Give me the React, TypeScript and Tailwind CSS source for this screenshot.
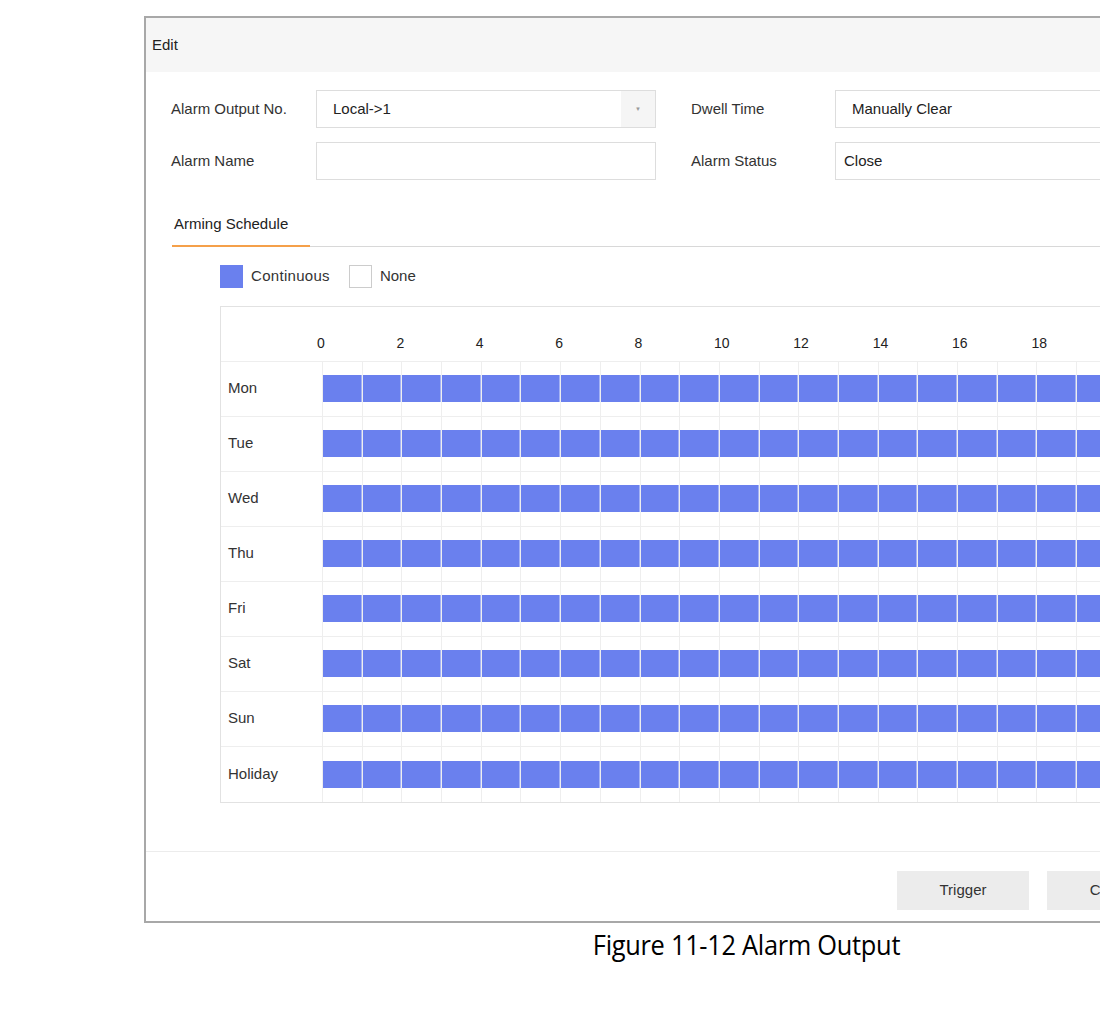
import React from "react";

const days = ["Mon", "Tue", "Wed", "Thu", "Fri", "Sat", "Sun", "Holiday"];
const hours = Array.from({ length: 24 }, (_, i) => i);

export default function App() {
  return (
    <div className="w-[1100px] h-[1013px] overflow-hidden bg-white relative" style={{ fontFamily: "Arial, 'Liberation Sans', sans-serif" }}>
      <div className="ml-[144px] mt-[16px] w-[1200px] h-[907px] border-2 border-[#a8a8a8] flex flex-col text-[#222]">
        <div className="h-[54px] bg-[#f6f6f6] flex items-center pl-[6px] text-[15px]">Edit</div>
        <div className="flex-1 relative">
          <div className="flex pt-[18px]">
            <div className="flex flex-col gap-[14px] pl-[25px]">
              <div className="flex items-center h-[38px]">
                <span className="w-[145px] text-[15px] text-[#333]">Alarm Output No.</span>
                <div className="w-[340px] h-[38px] border border-[#ddd] flex items-center">
                  <span className="flex-1 pl-[16px] text-[15px]">Local-&gt;1</span>
                  <div className="w-[34px] h-full bg-[#f5f5f5] flex items-center justify-center text-[6px] text-[#999]">▼</div>
                </div>
              </div>
              <div className="flex items-center h-[38px]">
                <span className="w-[145px] text-[15px] text-[#333]">Alarm Name</span>
                <div className="w-[340px] h-[38px] border border-[#ddd]" />
              </div>
            </div>
            <div className="flex flex-col gap-[14px] pl-[35px]">
              <div className="flex items-center h-[38px]">
                <span className="w-[144px] text-[15px] text-[#333]">Dwell Time</span>
                <div className="w-[400px] h-[38px] border border-[#ddd] flex items-center pl-[16px] text-[15px]">Manually Clear</div>
              </div>
              <div className="flex items-center h-[38px]">
                <span className="w-[144px] text-[15px] text-[#333]">Alarm Status</span>
                <div className="w-[400px] h-[38px] border border-[#ddd] flex items-center pl-[8px] text-[15px]">Close</div>
              </div>
            </div>
          </div>
          <div className="ml-[26px] mt-[33px] border-b border-[#d8d8d8] flex">
            <div className="px-[2px] pb-[9px] border-b-2 border-[#f5a04a] -mb-[1px] text-[15px] w-[138px]">Arming Schedule</div>
          </div>
          <div className="ml-[74px] mt-[18px] flex items-center h-[24px] text-[15px] text-[#333]">
            <div className="w-[23px] h-[23px] bg-[#6a80ee]" />
            <span className="ml-[8px] tracking-[0.3px]">Continuous</span>
            <div className="ml-[19px] w-[23px] h-[23px] border border-[#ccc]" />
            <span className="ml-[8px]">None</span>
          </div>
          <div className="ml-[74px] mt-[17px] w-[1100px] border border-[#e2e2e2]">
            <div className="flex h-[55px] border-b border-[#eee]">
              <div className="w-[102px]" />
              {hours.map((h) => (
                <div key={h} className="w-[39.7px] relative">
                  {h % 2 === 0 && <span className="absolute left-[-6px] top-[26px] text-[14px]">{h}</span>}
                </div>
              ))}
            </div>
            {days.map((d) => (
              <div key={d} className="flex h-[55px] border-b border-[#eee] last:border-b-0">
                <div className="w-[102px] flex items-center pl-[7px] text-[15px] text-[#333] border-r border-[#eee]">{d}</div>
                {hours.map((h) => (
                  <div key={h} className="w-[39.7px] border-r border-[#eee] flex items-center">
                    <div className="w-full h-[27px] bg-[#6a80ee] border-r border-[#a4b2f4]" />
                  </div>
                ))}
              </div>
            ))}
          </div>
          <div className="absolute left-0 right-0 bottom-[69px] border-t border-[#ececec]" />
          <div className="absolute bottom-[11px] left-[751px] flex gap-[18px]">
            <div className="w-[132px] h-[39px] bg-[#ececec] flex items-center justify-center text-[15px] text-[#333]">Trigger</div>
            <div className="w-[132px] h-[39px] bg-[#ececec] flex items-center justify-center text-[15px] text-[#333]">Cancel</div>
          </div>
        </div>
      </div>
      <div className="text-center ml-[392px] w-[708px] mt-[2px] text-[27px] text-black" style={{ fontFamily: "'Open Sans', sans-serif" }}>
        <span className="inline-block scale-x-[0.94] tracking-[-0.3px]">Figure 11-12 Alarm Output</span>
      </div>
    </div>
  );
}
